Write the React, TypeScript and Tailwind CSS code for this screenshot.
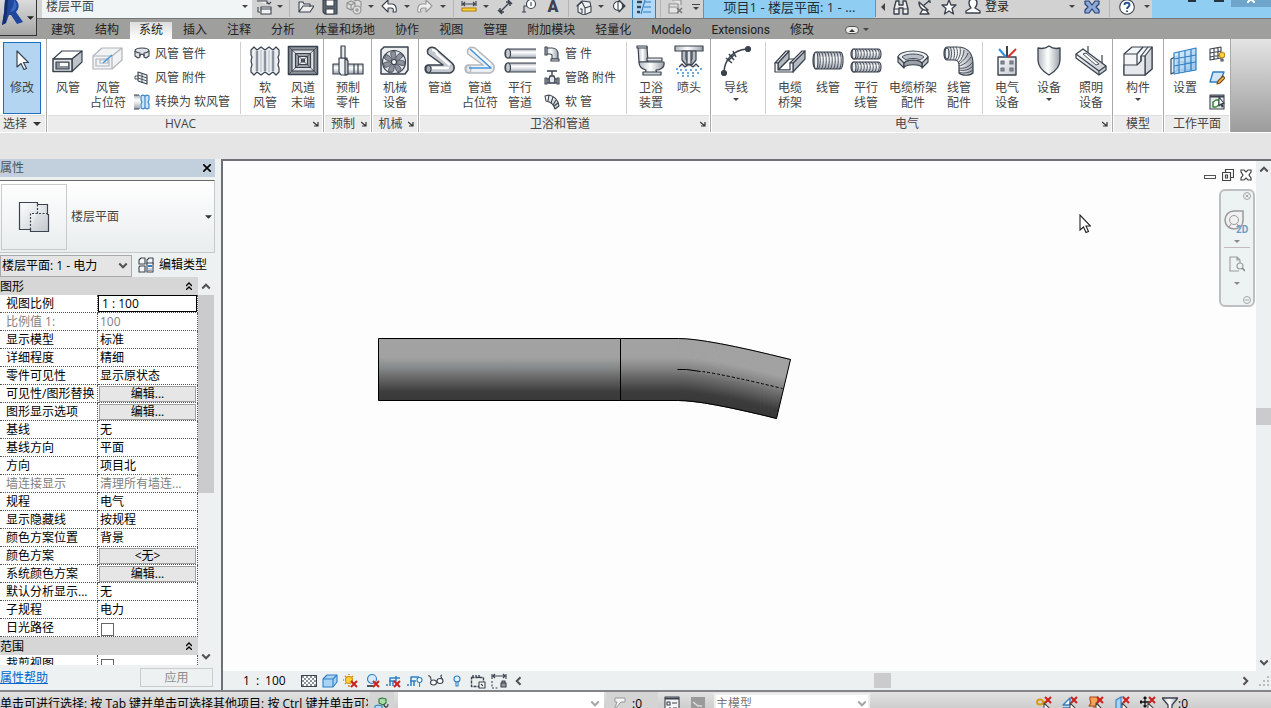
import type { ReactNode } from "react";

const INK = "#3b434f";
const BLUE = "#2f7fc4";

/* ---------- shared bits ---------- */

const Defs = () => (
  <svg className="absolute h-0 w-0" aria-hidden="true">
    <defs>
      <linearGradient id="metal" x1="0" y1="0" x2="0" y2="1">
        <stop offset="0" stopColor="#a3aab2" />
        <stop offset="0.35" stopColor="#ffffff" />
        <stop offset="0.6" stopColor="#dfe3e7" />
        <stop offset="1" stopColor="#9aa1a9" />
      </linearGradient>
      <linearGradient id="metalH" x1="0" y1="0" x2="1" y2="0">
        <stop offset="0" stopColor="#b4bac1" />
        <stop offset="0.45" stopColor="#ffffff" />
        <stop offset="1" stopColor="#9aa1a9" />
      </linearGradient>
      <linearGradient id="soft" x1="0" y1="0" x2="1" y2="1">
        <stop offset="0" stopColor="#ffffff" />
        <stop offset="1" stopColor="#c3c8ce" />
      </linearGradient>
      <linearGradient id="glass" x1="0" y1="0" x2="1" y2="1">
        <stop offset="0" stopColor="#e3f2fd" />
        <stop offset="1" stopColor="#7db9e8" />
      </linearGradient>
      <linearGradient id="duct" x1="0" y1="0" x2="0" y2="1">
        <stop offset="0" stopColor="#a2a2a2" />
        <stop offset="0.3" stopColor="#a2a2a2" />
        <stop offset="0.48" stopColor="#858888" />
        <stop offset="0.62" stopColor="#6a6a6a" />
        <stop offset="0.76" stopColor="#505050" />
        <stop offset="0.86" stopColor="#3d3d3d" />
        <stop offset="1" stopColor="#393939" />
      </linearGradient>
    </defs>
  </svg>
);

const Svg32 = ({ children }: { children: ReactNode }) => (
  <svg className="h-8 w-8 shrink-0" viewBox="0 0 32 32" fill="none" stroke={INK} strokeWidth="1.2" strokeLinejoin="round">
    {children}
  </svg>
);

const Svg16 = ({ children }: { children: ReactNode }) => (
  <svg className="h-4 w-4 shrink-0" viewBox="0 0 16 16" fill="none" stroke={INK} strokeWidth="1.1" strokeLinejoin="round">
    {children}
  </svg>
);

const Caret = () => (
  <svg className="h-[3px] w-[6px] shrink-0 text-[#444]" viewBox="0 0 6 3">
    <path d="M0 0h6L3 3z" fill="currentColor" />
  </svg>
);

const Chevron = ({ d, color = "#505050" }: { d: string; color?: string }) => (
  <svg className="h-[10px] w-[10px] shrink-0" viewBox="0 0 8 8" fill="none" stroke={color} strokeWidth="1.6">
    <path d={d} />
  </svg>
);

const UP = "M1 6l3-3 3 3";
const DOWN = "M1 2l3 3 3-3";
const LEFT = "M6 1L3 4l3 3";
const RIGHT = "M2 1l3 3-3 3";

const RedX = ({ x = 8, y = 8 }: { x?: number; y?: number }) => (
  <path d={`M${x} ${y}l6 6m0-6l-6 6`} stroke="#c9201c" strokeWidth="2" />
);

/* ---------- ribbon icons, 32px ---------- */

const ArrowIcon = () => (
  <Svg32>
    <path d="M11 6v16l4-3.500 3 6 2.500-1-3-6h5z" fill="#fff" />
  </Svg32>
);

const DuctIcon = () => (
  <Svg32>
    <path d="M1 14l9-8h20L20 14z" fill="#fff" />
    <path d="M20 14l10-8v11l-10 9.500z" fill="#bfc4ca" />
    <path d="M1 14h19v12.500H1z" fill="#e6e8eb" strokeWidth="1.500" />
    <path d="M4 17h13v7H4z" fill="#8b929b" />
    <path d="M8 18h8v3H8z" fill="#fff" stroke="none" />
  </Svg32>
);

const DuctGhostIcon = () => (
  <Svg32>
    <g stroke="#b0b4b9">
      <path d="M1 11l9-8h20v12l-10 9H1z" fill="#f2f3f4" />
      <path d="M1 11h19v13M20 11l10-8M4 14h13v7H4z" />
      <path d="M8 15h8v3H8z" fill="#fff" />
    </g>
    <path d="M11 18l9-8" stroke="#4a9be0" strokeWidth="1.6" />
  </Svg32>
);

const FlexDuctIcon = () => (
  <Svg32>
    <path
      d="M2 5l3-3 3 3 4-3 4 3 4-3 4 3 3-3 3 3v5l-1 2 1 4-1 4 1 3v4l-3 3-3-3-4 3-4-3-4 3-4-3-3 3-3-3v-4l1-3-1-4 1-4-1-2z"
      fill="#eceef1"
    />
    <path d="M8 6v20M16 6v20M24 6v20" stroke="#8b929b" strokeWidth="2.500" />
    <path d="M12 5v22M20 5v22" stroke="#c3c8ce" strokeWidth="1.500" />
  </Svg32>
);

const TerminalIcon = () => (
  <Svg32>
    <path d="M1.500 1.500h29v28h-29z" fill="#8e959d" strokeWidth="1.600" />
    <path d="M5 5h22v21H5z" fill="#dfe2e5" />
    <path d="M8.500 8.500h15v14h-15z" fill="#9ba1a9" />
    <path d="M11.500 11.500h9v8h-9z" fill="#eceef0" />
    <path d="M14.500 14h3v3h-3z" fill="#555d68" />
    <path d="M1.500 1.500l13 12.500m3 0l13-12.500m-29 28l13-12.500m3 0l13 12.500" strokeWidth="0.800" />
  </Svg32>
);

const FabIcon = () => (
  <Svg32>
    <path d="M1 19h8v10H1zM15 19h16v10H15z" fill="url(#metal)" />
    <path d="M22 19v10m4-10v10" />
    <path d="M7 13h8v17H9l-2-3z" fill="#f2f4f5" />
    <path d="M9 1h4v12H9zM13 13l3 3v13l-3 1z" fill="url(#metalH)" />
  </Svg32>
);

const FanIcon = () => (
  <Svg32>
    <path d="M2 5l3-3h24v23l-3 4H2z" fill="#eceef0" strokeWidth="1.500" />
    <circle cx="15" cy="17" r="11.500" fill="#e4e7ea" />
    {[0, 51, 103, 154, 206, 257, 309].map((a) => (
      <path key={a} d="M15 15C12 13 11 9 12 7l4-1c1 3 1 6-1 9z" fill="#8b929b" strokeWidth="0.700" transform={`rotate(${a} 15 17)`} />
    ))}
    <circle cx="15" cy="17" r="2.500" fill="#fff" />
  </Svg32>
);

const PipeIcon = ({ ghost = false }: { ghost?: boolean }) => (
  <Svg32>
    <g stroke={ghost ? "#b4b8bd" : INK}>
      <path d="M4 20h15L4 9C2 4 6 1 11 3l17 15c4 4 2 9-2 10H5c-5 0-5-8-1-8z" fill={ghost ? "#eceef0" : "#c3c8ce"} strokeWidth="1.500" />
      <path d="M8 5c3 0 5 2 5 4l13 11M8 23h17" stroke="#fff" strokeWidth="2.500" />
      <ellipse cx="4.500" cy="24" rx="2.500" ry="3.500" fill={ghost ? "#e4e6e9" : "#a3aab2"} />
    </g>
    {ghost && <path d="M6 4l21 19H5" stroke="#3f94df" strokeWidth="1.500" />}
  </Svg32>
);

const ParallelPipeIcon = () => (
  <Svg32>
    {[4, 18].map((y) => (
      <g key={y}>
        <path d={`M32 ${y}H4c-4 0-4 9 0 9h28`} fill="url(#metal)" strokeWidth="1.200" />
        <ellipse cx="4" cy={y + 4.5} rx="2.500" ry="4.500" fill="#c5cad0" />
      </g>
    ))}
  </Svg32>
);

const ToiletIcon = () => (
  <Svg32>
    <path d="M3 2h9l1 15H4z" fill="url(#metalH)" />
    <path d="M2 1h10v2H2zM12 13h15v3H12z" fill="#e4e7ea" />
    <path d="M4 17h25c1 6-4 8-8 8l1 4H10l1-4c-4-1-7-4-7-8z" fill="url(#metalH)" />
    <path d="M8 27h18v3H8z" fill="#cfd4d9" />
  </Svg32>
);

const SprinklerIcon = () => (
  <Svg32>
    <path d="M2 1h28v5H2z" fill="url(#metalH)" />
    <path d="M9 6h4v8l3 4 3-4V6h4v9l-5 6h-4l-5-6z" fill="#b7bdc4" />
    <path d="M14 6h4v14h-4zM6 22l3-3 3 3 4-3 4 3 3-3 3 3" fill="#e4e7ea" />
    <path d="M7 25h18M4 28h24M9 31h14" stroke="#3d8fd6" strokeWidth="1.500" strokeDasharray="2 3" />
    <path d="M3 24h2m22 0h2" stroke="#3d8fd6" strokeWidth="1.500" />
  </Svg32>
);

const WireIcon = () => (
  <Svg32>
    <path d="M4 28C4 15 13 5 27 4" strokeWidth="1.500" />
    <circle cx="4" cy="28" r="2.500" fill={INK} />
    <circle cx="28" cy="4" r="2.500" fill={INK} />
    <path d="M6 13l6 5m-3-9l5 6m-1-9l3 6m-8 4l6-6" strokeWidth="1.500" />
  </Svg32>
);

const TrayIcon = () => (
  <Svg32>
    <path d="M4 25l11-11h7l-5 11z" fill="#fff" />
    <path d="M4 18L15 6v8L4 25z" fill="#b4bac1" />
    <path d="M1 18L12 6h3L4 18z" fill="#f2f3f5" />
    <path d="M19 18L31 6v8L19 27z" fill="#b4bac1" />
    <path d="M16 18L28 6h3L19 18z" fill="#f2f3f5" />
    <path d="M1 18h3v7h12v-7h3v9H1z" fill="#f4f5f6" />
  </Svg32>
);

const Coil = ({ y, h }: { y: number; h: number }) => (
  <g>
    <path d={`M4 ${y}h24c4 0 4 ${h} 0 ${h}H4c-4 0-4-${h} 0-${h}z`} fill="url(#metal)" strokeWidth="1.200" />
    {[6, 9, 12, 15, 18, 21, 24, 27].map((x) => (
      <path key={x} d={`M${x} ${y}c3 1 3 ${h - 1} 0 ${h}`} strokeWidth="0.9" />
    ))}
    <ellipse cx="4" cy={y + h / 2} rx="2" ry={h / 2} fill="#eceef0" />
  </g>
);

const ConduitIcon = () => (
  <Svg32>
    <Coil y={7} h={17} />
  </Svg32>
);

const ParallelConduitIcon = () => (
  <Svg32>
    <Coil y={4} h={10} />
    <Coil y={17} h={10} />
  </Svg32>
);

const TrayFittingIcon = () => (
  <Svg32>
    <path d="M1 12v5l6 6v-6zM31 12v5l-6 6v-6z" fill="#c3c8ce" />
    <path d="M7 18c4-4 14-4 18 0v4c-4-3-14-3-18 0z" fill="#9aa1a9" />
    <path d="M1 12C3 4 29 4 31 12l-6 6c-3-4-15-4-18 0z" fill="#eceef0" />
    <path d="M5 12c3-4 19-4 22 0l-4 3c-3-2-11-2-14 0z" fill="#b9bfc6" strokeWidth="0.900" />
  </Svg32>
);

const ConduitFittingIcon = () => (
  <Svg32>
    <path d="M4 2h10c12 0 16 8 16 17v9c-3 3-11 3-14 0v-8c0-3-2-5-5-5H4C0 15 0 2 4 2z" fill="url(#metalH)" strokeWidth="1.200" />
    <path d="M7 2c2 3 2 10 0 13M10 2c2 3 2 10 0 13M13 2c2 3 2 10-1 13M17 3c1 4 0 9-3 12.500M21 5c0 4-2 9-5 12M25 8c-1 4-5 8-9 11M28 12c-3 5-8 8-12 9M30 17c-4 5-9 7-14 6M30 21c-4 4-9 5-14 4M30 25c-4 3-10 4-14 2" strokeWidth="0.900" />
    <ellipse cx="4" cy="8.500" rx="2" ry="5.500" fill="#eceef0" />
  </Svg32>
);

const ElecEquipIcon = () => (
  <Svg32>
    <path d="M7 12h18v18H7z" fill="url(#soft)" strokeWidth="1.400" />
    <path d="M16 1v11" strokeWidth="2" />
    <path d="M8 4l7 8" stroke="#2e8fe0" strokeWidth="2" />
    <path d="M25 4l-8 8" stroke="#d8322b" strokeWidth="2" />
    <path d="M10 16h3v3h-3zM19 16h3v3h-3zM10 23h3v3h-3zM19 23h3v3h-3z" fill="#8b929b" stroke="#6b737d" />
  </Svg32>
);

const ShieldIcon = () => (
  <Svg32>
    <path d="M16 1c4 3 7 3 11 2v12c0 6-4 11-11 15C9 26 5 21 5 15V3c4 1 7 1 11-2z" fill="url(#metalH)" strokeWidth="1.300" />
  </Svg32>
);

const LightIcon = () => (
  <Svg32>
    <path d="M13 1v8M27 10v8" />
    <path d="M1 9l7-5 23 17v4l-7 5L1 13z" fill="url(#soft)" strokeWidth="1.300" />
    <path d="M1 9l23 17v4m0-4l7-5" />
    <path d="M8 9l3-1 13 11-3 1z" fill="#fff" strokeWidth="0.900" />
  </Svg32>
);

const ComponentIcon = () => (
  <Svg32>
    <path d="M2 9l8-7h20v22l-7 6H2z" fill="#f4f5f6" />
    <path d="M23 11l7-9v22l-7 6z" fill="#d3d7db" />
    <path d="M2 20h13l4-4v-5h4v19H2z" fill="#e6e8eb" />
    <path d="M2 9h13v11M15 9l6-7M19 11l7-9M19 11v5" strokeWidth="1.200" />
  </Svg32>
);

const WorkplaneIcon = () => (
  <Svg32>
    <path d="M2 14l6-3v15l-6 3zM8 17h14v8H8z" fill="#eef0f2" />
    <path d="M5 8l22-5v22L5 29z" fill="url(#glass)" fillOpacity="0.85" stroke={BLUE} />
    <path d="M10 7v21M16 6v21M22 4v22M5 14l22-4M5 21l22-4" stroke={BLUE} />
  </Svg32>
);

/* ---------- ribbon icons, 16px ---------- */

const DuctFitting = () => (
  <Svg16>
    <path d="M1 5c0-4 14-4 14 0v5l-3 2-2-1V9c-1-1-3-1-4 0v2l-2 1-3-2z" fill="#dfe2e6" />
    <path d="M1 5c2 2 3 2 5 2v3m9-5c-2 2-3 2-5 2v3" />
  </Svg16>
);
const DuctAccessory = () => (
  <Svg16>
    <path d="M4 2l9 3v9L4 11z" fill="#eceef0" />
    <path d="M4 5l9 3M4 8l9 3M1 6h3M1 6v3h3M8 3v10" strokeWidth="0.900" />
  </Svg16>
);
const ConvertFlex = () => (
  <Svg16>
    <path d="M0 1h6v14H0z" fill="url(#metal)" stroke="none" />
    <path d="M0 1h5m-5 14h5" />
    <path d="M7 2l2-1 2 1 2-1 2 1v4l-1 2 1 2v4l-2 1-2-1-2 1-2-1v-4l1-2-1-2z" fill="#cde6fa" stroke={BLUE} />
    <path d="M11 2v12" stroke={BLUE} />
  </Svg16>
);
const PipeFitting = () => (
  <Svg16>
    <path d="M1 1h2v8H1zM3 2h5c4 0 6 3 6 6v5H8V9c0-1-1-1-2-1H3z" fill="url(#metalH)" />
    <path d="M7 13h8v2H7z" fill="#e4e7ea" />
  </Svg16>
);
const PipeAccessory = () => (
  <Svg16>
    <path d="M3 1h10M8 1v5M6 6h4l1 3v4H5V9z" fill="#e4e7ea" strokeWidth="1.400" />
    <path d="M1 8h2v6H1zM13 8h2v6h-2zM3 9h2v4H3zM11 9h2v4h-2z" fill="#b9bfc6" />
  </Svg16>
);
const FlexPipe = () => (
  <Svg16>
    <path d="M1 2l4-1c5 1 9 5 10 11l-4 3c-1-4-3-7-9-8z" fill="url(#soft)" />
    <path d="M5 1L4 7m5-4L7 9m5-3L9 11m5-2l-4 3" />
  </Svg16>
);
const ShowPlane = () => (
  <Svg16>
    <path d="M1 3l11-2v11L1 14zM5 2v11M9 1v11M1 7l11-2M1 11l11-2" fill="#fff" />
    <circle cx="13" cy="9" r="2.800" fill="#ffd23c" stroke="#b98a10" />
    <path d="M12 13h2v2h-2z" fill="#fff" />
  </Svg16>
);
const RefPlane = () => (
  <Svg16>
    <path d="M4 2h11l-4 10H1z" fill="#cfe6fa" stroke={BLUE} strokeWidth="1.400" />
    <path d="M8 14l1-3 5-5 2 2-5 5z" fill="#f0b45a" stroke="#7b4b14" />
  </Svg16>
);
const ViewerPlane = () => (
  <Svg16>
    <path d="M1 1h14v14H1z" fill="#e8eaec" />
    <path d="M1 2.500h14" strokeWidth="2" />
    <path d="M4 8l3-2h3v5l-3 2H4z" fill="#fff" stroke="#2d8a34" strokeWidth="1.500" />
    <path d="M10 3v9l2-2 1 3 1-.5-1-3h2z" fill="#fff" />
  </Svg16>
);

/* ---------- quick access bar ---------- */

const Tool = ({ label, className = "w-6", children }: { label: string; className?: string; children: ReactNode }) => (
  <button aria-label={label} className={`flex h-4 shrink-0 items-center justify-center ${className}`}>
    {children}
  </button>
);

const Sep = ({ className = "w-[10px]" }: { className?: string }) => (
  <div className={`flex h-5 shrink-0 justify-center ${className}`}>
    <div className="h-5 w-px bg-[#b4b4b4]" />
  </div>
);

const QuickAccess = () => (
  <div className="flex h-[19px] items-center overflow-hidden border-b border-[#777] bg-[#d2d2d2] pb-[5px]">
    <div className="ml-[5px] flex h-6 w-[210px] shrink-0 items-center bg-[#f1f5f6] pr-1">
      <select aria-label="视图类型" className="flex-1 appearance-none bg-transparent pl-1 text-xs text-[#444] outline-none">
        <option>楼层平面</option>
      </select>
      <Caret />
    </div>
    <Tool label="切换窗口" className="w-[23px]">
      <Svg16>
        <path d="M1 2h10v3M5 8h10v7H5zM5 10h10M2 8v5h2m7-10l2 2 2-2" fill="#f4f4f4" />
      </Svg16>
    </Tool>
    <Tool label="窗口选项" className="w-[9px]"><Caret /></Tool>
    <Sep />
    <Tool label="打开">
      <Svg16>
        <path d="M1 13V3h4l1 2h6v3M1 13l4-6h11l-4 6z" fill="#eee" />
      </Svg16>
    </Tool>
    <Tool label="保存">
      <Svg16>
        <path d="M1 1h14v14H3l-2-2z" fill="#5c6470" />
        <path d="M4 1h8v6H4zM4 10h8v5H4z" fill="#fff" />
      </Svg16>
    </Tool>
    <Tool label="同步">
      <Svg16>
        <g stroke="#8f8f8f" fill="#dcdcdc">
          <path d="M1 4l4-2 4 2v5l-4 2-4-2zM1 4l4 2 4-2M5 6v5M8 2l4-1 3 2v5l-4 2" />
          <circle cx="11" cy="11" r="4" />
          <path d="M9 11h4m-2-2v4" />
        </g>
      </Svg16>
    </Tool>
    <Tool label="同步选项" className="w-[10px]"><Caret /></Tool>
    <Tool label="放弃" className="w-[26px]">
      <Svg16>
        <path d="M1 7l6-6v4h4c3 0 5 3 4 8h-3c1-3 0-4-2-4H7v4z" fill="#fff" />
      </Svg16>
    </Tool>
    <Tool label="放弃选项" className="w-[10px]"><Caret /></Tool>
    <Tool label="重做" className="w-[26px]">
      <Svg16>
        <path d="M15 7L9 1v4H5c-3 0-5 3-4 8h3c-1-3 0-4 2-4h3v4z" fill="#eee" stroke="#999" />
      </Svg16>
    </Tool>
    <Tool label="重做选项" className="w-[10px]"><Caret /></Tool>
    <Sep />
    <Tool label="测量" className="w-[22px]">
      <Svg16>
        <path d="M1 2v5m14-5v5M2 5h12M4 3L2 5l2 2m8-4l2 2-2 2" />
        <path d="M1 9h14v3H1z" fill="#ffd23c" stroke="#b27c08" />
      </Svg16>
    </Tool>
    <Tool label="测量选项" className="w-3"><Caret /></Tool>
    <Tool label="对齐尺寸标注" className="w-[25px]">
      <Svg16>
        <path d="M3 13L13 3M9 3h4v4M3 9v4h4M11 1l4 4M1 11l4 4" strokeWidth="1.400" />
      </Svg16>
    </Tool>
    <Tool label="按类别标记">
      <Svg16>
        <circle cx="10" cy="5" r="4.500" fill="#fff" />
        <path d="M10 3v4M6 7H3v6M1 13h4" />
      </Svg16>
    </Tool>
    <Tool label="文字">
      <span className="font-[Roboto] text-base font-black leading-4 text-[#3b434f]">A</span>
    </Tool>
    <Sep className="w-[7px]" />
    <Tool label="默认三维视图">
      <Svg16>
        <path d="M1 7l5-5 8 1 1 5v5l-7 3-6-3V7z" fill="#f1f1f1" />
        <path d="M1 7l5-4 3 6v6M9 9l6-2M4 10h2v4" />
      </Svg16>
    </Tool>
    <Tool label="三维视图选项" className="w-[10px]"><Caret /></Tool>
    <Tool label="剖面" className="w-[26px]">
      <Svg16>
        <path d="M8 1l6 6-6 6z" fill={INK} />
        <circle cx="7" cy="7" r="4.500" fill="#fff" />
        <path d="M7 2.500v9" />
      </Svg16>
    </Tool>
    <button aria-label="细线" className="flex h-6 w-6 shrink-0 items-center justify-center border border-[#2f7fc4] bg-[#b5d8f5]">
      <Svg16>
        <path d="M1 3h5m-5 5h4m-4 5h3" strokeWidth="2.400" />
        <path d="M9 3h6M8 8h7M7 13h8M9 1L5 15" stroke={BLUE} />
      </Svg16>
    </button>
    <Sep className="w-2" />
    <Tool label="关闭隐藏窗口">
      <Svg16>
        <path d="M4 1h9v5M1 5h9v9H1zM1 8h8" stroke="#8f8f8f" fill="#e4e4e4" />
        <path d="M9 9l5 5m0-5l-5 5" stroke="#777" strokeWidth="1.600" />
      </Svg16>
    </Tool>
    <Tool label="自定义" className="w-[15px]">
      <svg className="h-2 w-2" viewBox="0 0 8 8" fill="#444">
        <path d="M0 1h8v1H0zM1 4h6L4 7z" />
      </svg>
    </Tool>
    <div className="h-6 min-w-0 flex-1 overflow-hidden border-l border-[#888] bg-[#8fcdf2] text-center text-[13px] leading-6 whitespace-nowrap text-[#20303c]">
      项目1 - 楼层平面: 1 - ...
    </div>
    <div className="flex shrink-0 items-center border-l border-[#888]">
      <Tool label="收起" className="w-[13px]">
        <svg className="h-2 w-1" viewBox="0 0 4 8"><path d="M4 0v8L0 4z" fill="#444" /></svg>
      </Tool>
      <Tool label="搜索">
        <Svg16>
          <path d="M3 2h3v4h4V2h3l2 8v5h-5V9H6v6H1v-5z" fill="#eee" strokeWidth="1.400" />
          <path d="M1 10h5m4 0h5" />
        </Svg16>
      </Tool>
      <Tool label="通讯中心">
        <Svg16>
          <path d="M2 3c0 6 4 9 9 8zM6 7l6-5m-1 0h2v2M6 10l-3 5h9l-3-4" fill="#fff" strokeWidth="1.400" />
        </Svg16>
      </Tool>
      <Tool label="收藏夹">
        <Svg16>
          <path d="M8 1l2 5h5l-4 3.500 1.500 5.500L8 12l-4.500 3L5 9.500 1 6h5z" fill="#fff" strokeWidth="1.300" />
        </Svg16>
      </Tool>
      <Tool label="用户">
        <Svg16>
          <path d="M8 0c3 0 4 2 4 4s-1 4-2 5l5 3v2H1v-2l5-3C5 8 4 6 4 4s1-4 4-4z" fill="#fff" strokeWidth="1.400" />
        </Svg16>
      </Tool>
      <button className="w-[81px] text-left text-xs leading-4 text-[#222]">登录</button>
      <Tool label="登录选项" className="w-3"><Caret /></Tool>
      <Tool label="应用商店" className="w-7">
        <Svg16>
          <path d="M1 2h4l3 4 3-4h4v3l-3 3 3 3v3h-4l-3-4-3 4H1v-3l3-3-3-3z" fill="#8fa9d6" stroke="#26427c" strokeWidth="1.200" />
        </Svg16>
      </Tool>
      <Sep className="w-[7px]" />
      <Tool label="帮助" className="w-7">
        <Svg16>
          <circle cx="8" cy="8" r="7.300" fill="#fff" />
          <path d="M5.500 6c0-3 5-3 5 0 0 2-2.500 2-2.500 4m0 1.500V13" stroke="#27508f" strokeWidth="1.900" />
        </Svg16>
      </Tool>
      <Tool label="帮助选项" className="w-[11px]"><Caret /></Tool>
    </div>
    <div className="flex h-6 w-[119px] shrink-0 items-start bg-[#8fcdf2]">
      <button aria-label="最小化" className="ml-9 mt-[3px] h-1 w-2 bg-[#26333d]" />
      <button aria-label="还原" className="ml-[18px] h-[7px] w-[10px] border-2 border-[#26333d]" />
      <button aria-label="关闭" className="ml-auto flex h-3 w-10 justify-center bg-[#6fa5cb]">
        <svg className="h-2 w-2" viewBox="0 0 8 8" stroke="#fff" strokeWidth="2"><path d="M0 0l8 8M8 0L0 8" /></svg>
      </button>
    </div>
  </div>
);

/* ---------- tabs ---------- */

const tabs = ["建筑", "结构", "系统", "插入", "注释", "分析", "体量和场地", "协作", "视图", "管理", "附加模块", "轻量化", "Modelo", "Extensions", "修改"];

const Tabs = () => (
  <nav className="flex h-5 items-end bg-[#9f9f9e] pl-1 font-[Roboto,'Noto_Sans_CJK_SC',sans-serif]">
    {tabs.map((t) => (
      <button
        key={t}
        className={
          t === "系统"
            ? "mx-px h-[17px] shrink-0 bg-linear-to-b from-[#dcdcdc] to-white px-[9px] text-xs leading-[15px] text-[#222]"
            : "h-[17px] shrink-0 px-[10px] text-xs leading-[15px] text-[#222]"
        }
      >
        {t}
      </button>
    ))}
    <button aria-label="最小化功能区" className="mb-[5px] ml-[21px] flex h-2 w-[14px] items-center justify-center rounded-sm border border-[#555] bg-[#eee]">
      <svg className="h-[3px] w-[6px]" viewBox="0 0 6 3"><path d="M0 3h6L3 0z" fill="#333" /></svg>
    </button>
    <button aria-label="功能区选项" className="mb-2 ml-1"><Caret /></button>
  </nav>
);

/* ---------- ribbon ---------- */

interface PanelProps {
  title: string;
  className?: string;
  launcher?: boolean;
  children: ReactNode;
}

const Panel = ({ title, className = "", launcher, children }: PanelProps) => (
  <section className={`flex shrink-0 flex-col border-r border-[#a9a9a9] ${className}`}>
    <div className="flex h-[76px] flex-none pl-px">{children}</div>
    <div className="mx-px flex h-[17px] items-center border-t border-[#dcdcdc] bg-[#ececec] text-xs leading-4 text-[#444]">
      <span className="flex-1 text-center whitespace-nowrap">{title}</span>
      {launcher && (
        <button aria-label={`${title} 设置`} className="mr-[3px]">
          <svg className="h-[6px] w-[6px]" viewBox="0 0 6 6" fill="none" stroke="#333" strokeWidth="1.200">
            <path d="M0 1l5 4M5 1v4H1" />
          </svg>
        </button>
      )}
    </div>
  </section>
);

interface BigProps {
  icon: ReactNode;
  lines: string[];
  className?: string;
  menu?: boolean;
}

const Big = ({ icon, lines, className = "w-[38px]", menu }: BigProps) => (
  <button className={`flex shrink-0 flex-col items-center pt-[6px] text-xs leading-[15px] whitespace-nowrap text-[#444] ${className}`}>
    {icon}
    <span className="mt-[3px] h-[15px]">{lines[0]}</span>
    {lines[1] && <span className="h-[15px]">{lines[1]}</span>}
    {menu && <span className="mt-[3px] flex"><Caret /></span>}
  </button>
);

const Small = ({ icon, label }: { icon: ReactNode; label: string }) => (
  <button className="flex h-6 items-center gap-[5px] text-xs whitespace-nowrap text-[#444]">
    {icon}
    {label}
  </button>
);

const Rule = () => <div className="mx-[5px] mt-[3px] h-[72px] w-px shrink-0 bg-[#cfcfcf]" />;

const Ribbon = () => (
  <div className="flex h-[94px] shrink-0 border-b border-white bg-white">
    <section className="flex w-[47px] shrink-0 flex-col border-r border-[#a9a9a9]">
      <div className="h-[76px] pl-[3px] pt-[3px]">
        <button className="flex h-[72px] w-[38px] flex-col items-center border border-[#1e70bf] bg-[#b3d5f2] pt-[2px] text-xs leading-[15px] text-[#444]">
          <ArrowIcon />
          <span className="mt-[3px]">修改</span>
        </button>
      </div>
      <button className="mr-px flex h-[17px] items-center gap-[6px] border-t border-[#dcdcdc] bg-[#ececec] pl-[3px] text-xs leading-4 text-[#444]">
        选择
        <svg className="h-1 w-2" viewBox="0 0 8 4"><path d="M0 0h8L4 4z" fill="#333" /></svg>
      </button>
    </section>

    <Panel title="HVAC" launcher className="w-[277px]">
      <Big className="w-10" icon={<DuctIcon />} lines={["风管"]} />
      <Big className="w-10" icon={<DuctGhostIcon />} lines={["风管", "占位符"]} />
      <div className="flex w-[107px] flex-col pl-[6px] pt-[3px]">
        <Small icon={<DuctFitting />} label="风管 管件" />
        <Small icon={<DuctAccessory />} label="风管 附件" />
        <Small icon={<ConvertFlex />} label="转换为 软风管" />
      </div>
      <Rule />
      <Big icon={<FlexDuctIcon />} lines={["软", "风管"]} />
      <Big icon={<TerminalIcon />} lines={["风道", "末端"]} />
    </Panel>

    <Panel title="预制" launcher className="w-12">
      <Big className="w-[46px]" icon={<FabIcon />} lines={["预制", "零件"]} />
    </Panel>

    <Panel title="机械" launcher className="w-[47px]">
      <Big className="w-[44px]" icon={<FanIcon />} lines={["机械", "设备"]} />
    </Panel>

    <Panel title="卫浴和管道" launcher className="w-[292px]">
      <Big className="w-10" icon={<PipeIcon />} lines={["管道"]} />
      <Big className="w-10" icon={<PipeIcon ghost />} lines={["管道", "占位符"]} />
      <Big className="w-10" icon={<ParallelPipeIcon />} lines={["平行", "管道"]} />
      <div className="flex w-[81px] flex-col pl-1 pt-[3px]">
        <Small icon={<PipeFitting />} label="管 件" />
        <Small icon={<PipeAccessory />} label="管路 附件" />
        <Small icon={<FlexPipe />} label="软 管" />
      </div>
      <Rule />
      <Big icon={<ToiletIcon />} lines={["卫浴", "装置"]} />
      <Big icon={<SprinklerIcon />} lines={["喷头"]} />
    </Panel>

    <Panel title="电气" launcher className="w-[402px]">
      <Big className="w-12" icon={<WireIcon />} lines={["导线"]} menu />
      <Rule />
      <Big icon={<TrayIcon />} lines={["电缆", "桥架"]} />
      <Big icon={<ConduitIcon />} lines={["线管"]} />
      <Big icon={<ParallelConduitIcon />} lines={["平行", "线管"]} />
      <Big className="w-14" icon={<TrayFittingIcon />} lines={["电缆桥架", "配件"]} />
      <Big className="w-9" icon={<ConduitFittingIcon />} lines={["线管", "配件"]} />
      <Rule />
      <Big icon={<ElecEquipIcon />} lines={["电气", "设备"]} />
      <Big className="w-[46px]" icon={<ShieldIcon />} lines={["设备"]} menu />
      <Big icon={<LightIcon />} lines={["照明", "设备"]} />
    </Panel>

    <Panel title="模型" className="w-[51px]">
      <Big className="w-12" icon={<ComponentIcon />} lines={["构件"]} menu />
    </Panel>

    <Panel title="工作平面" className="w-[67px]">
      <Big className="w-10" icon={<WorkplaneIcon />} lines={["设置"]} />
      <div className="flex flex-col gap-2 pl-1 pt-[7px]">
        <button aria-label="显示"><ShowPlane /></button>
        <button aria-label="参照平面"><RefPlane /></button>
        <button aria-label="查看器"><ViewerPlane /></button>
      </div>
    </Panel>
    <div className="flex-1 bg-linear-to-b from-[#e4e4e4] to-[#9c9c9c]" />
  </div>
);

/* ---------- properties palette ---------- */

interface Row {
  name: string;
  value?: string;
  kind?: "input" | "button" | "check" | "muted";
}

const graphics: Row[] = [
  { name: "视图比例", value: "1 : 100", kind: "input" },
  { name: "比例值 1:", value: "100", kind: "muted" },
  { name: "显示模型", value: "标准" },
  { name: "详细程度", value: "精细" },
  { name: "零件可见性", value: "显示原状态" },
  { name: "可见性/图形替换", value: "编辑...", kind: "button" },
  { name: "图形显示选项", value: "编辑...", kind: "button" },
  { name: "基线", value: "无" },
  { name: "基线方向", value: "平面" },
  { name: "方向", value: "项目北" },
  { name: "墙连接显示", value: "清理所有墙连...", kind: "muted" },
  { name: "规程", value: "电气" },
  { name: "显示隐藏线", value: "按规程" },
  { name: "颜色方案位置", value: "背景" },
  { name: "颜色方案", value: "<无>", kind: "button" },
  { name: "系统颜色方案", value: "编辑...", kind: "button" },
  { name: "默认分析显示...", value: "无" },
  { name: "子规程", value: "电力" },
  { name: "日光路径", kind: "check" },
];

const extents: Row[] = [{ name: "裁剪视图", kind: "check" }];

const Cell = ({ row }: { row: Row }) => {
  if (row.kind === "input")
    return <input id={row.name} defaultValue={row.value} className="block h-[17px] w-full border border-black bg-white px-[3px] text-xs outline-none" />;
  if (row.kind === "button")
    return (
      <button id={row.name} className="mx-px block h-4 w-[97px] border border-[#a0a0a0] bg-[#e6e6e6] text-xs leading-[14px]">
        {row.value}
      </button>
    );
  if (row.kind === "check")
    return <input id={row.name} type="checkbox" className="ml-[3px] mt-[3px] block h-[13px] w-[13px] appearance-none border border-[#666] bg-white" />;
  return <span className="pl-[2px]">{row.value}</span>;
};

const Group = ({ title, rows }: { title: string; rows: Row[] }) => (
  <tbody>
    <tr>
      <th colSpan={2} scope="colgroup" className="h-[18px] bg-[#d6d6d6] p-0 text-left font-normal">
        <div className="flex items-center justify-between pr-[6px]">
          {title}
          <button aria-label={`折叠${title}`}>
            <svg className="h-2 w-[6px]" viewBox="0 0 6 8" fill="none" stroke="#000" strokeWidth="1.300">
              <path d="M0 4l3-3 3 3M0 8l3-3 3 3" />
            </svg>
          </button>
        </div>
      </th>
    </tr>
    {rows.map((r) => (
      <tr key={r.name} className={r.kind === "muted" ? "text-[#808080]" : "text-black"}>
        <th scope="row" className="h-[18px] border-r border-b border-dotted border-[#555] p-0 pl-[6px] text-left font-normal whitespace-nowrap">
          {r.kind && r.kind !== "muted" ? <label htmlFor={r.name}>{r.name}</label> : r.name}
        </th>
        <td className="h-[18px] border-r border-b border-dotted border-[#555] p-0 whitespace-nowrap">
          <Cell row={r} />
        </td>
      </tr>
    ))}
  </tbody>
);

const Properties = () => (
  <aside className="flex w-[221px] shrink-0 flex-col bg-[#eef1f2] pr-[6px] text-xs">
    <div className="flex h-[18px] shrink-0 items-center justify-between bg-[#c2cfdd] pr-1 text-[#4b5560]">
      属性
      <button aria-label="关闭属性">
        <svg className="h-2 w-2" viewBox="0 0 8 8" stroke="#000" strokeWidth="1.600"><path d="M0 0l8 8M8 0L0 8" /></svg>
      </button>
    </div>
    <div className="mt-[3px] flex h-[73px] shrink-0 items-center border-t border-r border-b border-t-[#666] border-r-[#c6c9cb] border-b-[#c6c9cb] bg-linear-to-b from-white to-[#e9edee] pl-px">
      <div className="flex h-[66px] w-[66px] items-center justify-center border border-[#c8cacc]">
        <svg className="h-8 w-8" viewBox="0 0 32 32" fill="url(#soft)" stroke={INK} strokeWidth="1.200">
          <path d="M1.500 1.500h18v2h10v10h1v17h-18v-2h-11z" />
          <path d="M19.500 3.500v9h10M12.500 28.500v-16h7" strokeDasharray="2 1.500" />
        </svg>
      </div>
      <button className="flex flex-1 items-center justify-between pl-1 pr-[2px] text-[#444]">
        楼层平面
        <svg className="h-1 w-[7px]" viewBox="0 0 8 4"><path d="M0 0h8L4 4z" fill="#333" /></svg>
      </button>
    </div>
    <div className="mt-px flex h-[23px] shrink-0 items-center">
      <div className="flex h-[22px] w-[132px] items-center border border-[#a9a9a9] bg-[#e5e5e5] pr-[3px]">
        <select aria-label="实例" className="min-w-0 flex-1 appearance-none bg-transparent pl-px text-xs outline-none">
          <option>楼层平面: 1 - 电力</option>
        </select>
        <Chevron d={DOWN} />
      </div>
      <button className="ml-[6px] flex items-center gap-[5px] pb-[2px]">
        <Svg16>
          <path d="M1 3l2-2h4v6H1zM9 3l2-2h4v6H9zM1 10l1-1h5v6H1z" fill="#f4f4f4" />
          <path d="M9 6h6v9H9z" fill="#fff" />
          <path d="M10.500 8.500h3v1h-3z" stroke={BLUE} />
          <path d="M10.500 12h1m1 0h1m-3 1.500h1m1 0h1" />
        </Svg16>
        编辑类型
      </button>
    </div>
    <div className="flex min-h-0 flex-1">
      <div className="w-[198px] overflow-hidden bg-white">
        <table className="w-full table-fixed border-separate border-spacing-0 leading-[17px]">
          <colgroup>
            <col className="w-[98px]" />
            <col />
          </colgroup>
          <Group title="图形" rows={graphics} />
          <Group title="范围" rows={extents} />
        </table>
      </div>
      <div className="flex w-[16px] flex-col items-center bg-[#eef0f1]">
        <button aria-label="向上滚动" className="flex h-[18px] items-center"><Chevron d={UP} /></button>
        <div className="h-[198px] w-full bg-[#cbcbcd]" />
        <button aria-label="向下滚动" className="mt-auto flex h-4 items-center"><Chevron d={DOWN} /></button>
      </div>
    </div>
    <div className="flex h-[25px] shrink-0 items-center justify-between pr-[2px]">
      <a href="#help" className="text-[#0066cc] underline">属性帮助</a>
      <button disabled className="h-[19px] w-[73px] border border-[#c9cbcc] leading-4 text-[#8d8d8d]">应用</button>
    </div>
  </aside>
);

/* ---------- drawing area ---------- */

const stops: [number, number][] = [[0, 162], [19, 162], [30, 134], [38, 106], [47, 80], [53, 61], [62, 57]];

const shade = (t: number) => {
  const i = Math.max(1, stops.findIndex(([p]) => p >= t));
  const [p0, c0] = stops[i - 1];
  const [p1, c1] = stops[i];
  const c = Math.round(c0 + ((c1 - c0) * (t - p0)) / (p1 - p0));
  return `rgb(${c},${c},${c})`;
};

// curve running along the elbow, t px below its upper edge
const bend = (t: number) => {
  const x = 412 - (14 * t) / 62;
  const y = 21 + (59 * t) / 62;
  return `M242 ${t}H300Q${x - (y - t) * 4} ${t} ${x} ${y}`;
};

const Duct = () => (
  <svg className="absolute left-[155px] top-[177px] h-[84px] w-[416px]" viewBox="-0.500 -0.500 416 84" fill="none" stroke="#000">
    {Array.from({ length: 62 }, (_, t) => (
      <path key={t} d={bend(t + 0.5)} stroke={shade(t + 0.5)} strokeWidth="1.800" />
    ))}
    <path d="M0 0h242v62H0z" fill="url(#duct)" />
    <path d={bend(0)} />
    <path d={bend(62)} />
    <path d="M412 21l-14 59" />
    <path d="M299 31h9l14 2" />
    <path d="M324 33q26 4 80 17" strokeDasharray="3 2" />
  </svg>
);

const NavBar = () => (
  <div className="absolute right-px top-[28px] flex h-[118px] w-[36px] flex-col items-center rounded-md border-2 border-[#bdbfc0] bg-[#edf2f3]">
    <button aria-label="关闭导航栏" className="mr-[2px] mt-px self-end">
      <svg className="h-2 w-2" viewBox="0 0 8 8" fill="none" stroke="#a5a5a5">
        <circle cx="4" cy="4" r="3.500" />
        <path d="M2.500 2.500l3 3m0-3l-3 3" />
      </svg>
    </button>
    <button aria-label="二维控制盘" className="mt-[10px]">
      <svg className="h-[26px] w-[26px]" viewBox="0 0 26 26" fill="none" stroke="#9b9b9b">
        <path d="M10 1h9v9c0 6-4 9-9 9s-9-4-9-9 4-9 9-9z" fill="#f1f1f1" strokeWidth="1.500" />
        <circle cx="10" cy="10" r="4.500" />
        <path d="M7 14l-2 3m8-3l2 3" />
        <text x="12" y="23" fill="#6f9cc6" stroke="none" className="font-[Roboto] text-[10px] font-bold">2D</text>
      </svg>
    </button>
    <span className="mt-1 flex opacity-60"><Caret /></span>
    <div className="mt-1 h-px w-[26px] bg-[#c3b9ba]" />
    <button aria-label="缩放区域" className="mt-2">
      <Svg16>
        <path d="M10 15H1V1h7l3 3v3M8 1v3h3" stroke="#9b9b9b" />
        <circle cx="11" cy="10" r="3" stroke="#9b9b9b" />
        <path d="M13 12l3 3" stroke="#888" strokeWidth="1.600" />
      </Svg16>
    </button>
    <span className="mt-[10px] flex opacity-60"><Caret /></span>
    <button aria-label="导航栏选项" className="mb-px mr-[2px] mt-auto self-end">
      <svg className="h-2 w-2" viewBox="0 0 8 8" fill="none" stroke="#a5a5a5">
        <circle cx="4" cy="4" r="3.500" />
        <path d="M2 4h4" />
      </svg>
    </button>
  </div>
);

const Canvas = () => (
  <div className="relative min-w-0 flex-1 overflow-hidden bg-[#fdfdfd]">
    <Duct />
    <svg className="absolute left-[856px] top-[53px] h-5 w-3" viewBox="0 0 12 20" fill="#fff" stroke="#222" strokeWidth="1.100">
      <path d="M1 1v15l3.500-3 2.500 5.500 2.500-1L7 12h4.500z" />
    </svg>
    <div className="absolute right-1 top-2 flex items-center gap-[6px]">
      <button aria-label="最小化视图" className="mt-[3px] h-1 w-3 border border-[#555]" />
      <button aria-label="还原视图">
        <svg className="h-3 w-3" viewBox="0 0 12 12" fill="#fff" stroke="#444" strokeWidth="1.200">
          <path d="M3.500 3V.500h8v8H9M.500 3.500h8v8h-8zM3.500 6h2v3h-2z" />
        </svg>
      </button>
      <button aria-label="关闭视图">
        <svg className="h-3 w-3" viewBox="0 0 12 12" fill="#fff" stroke="#444" strokeWidth="1.200">
          <path d="M1 1h3l2 2 2-2h3v2L9 6l2 3v2H8L6 9l-2 2H1V9l2-3-2-3z" />
        </svg>
      </button>
    </div>
    <NavBar />
  </div>
);

const ViewControls = () => (
  <div className="flex h-[19px] shrink-0 items-center bg-[#edf0f1]">
    <button className="ml-5 flex w-[58px] shrink-0 gap-[6px] text-xs leading-4 text-black">
      <span>1</span>
      <span>:</span>
      <span>100</span>
    </button>
    <div className="flex shrink-0 items-center gap-[5px]">
      <button aria-label="详细程度图案">
        <Svg16>
          <path d="M.500 2.500h15v11H.500z" fill="#fff" />
          <path d="M1 4h14M1 8h14M1 12h14" stroke="#8b929b" strokeWidth="2" strokeDasharray="2 2" />
          <path d="M3 6h12M3 10h12" stroke="#8b929b" strokeWidth="2" strokeDasharray="2 2" />
        </Svg16>
      </button>
      <button aria-label="视觉样式">
        <Svg16>
          <path d="M1 6l4-4h10v7l-4 5H1z" fill="#a8d3f5" stroke={BLUE} />
          <path d="M1 6h10v8M11 6l4-4" stroke={BLUE} />
        </Svg16>
      </button>
      <button aria-label="日光路径开关">
        <Svg16>
          <circle cx="6" cy="7" r="3.500" fill="#ffd23c" stroke="#d18a13" />
          <path d="M6 1v1M1 7H0M2 3l1 1m7-1L9 4M2 11l1-1M6 12v2" stroke="#d18a13" strokeWidth="1.500" />
          <RedX />
        </Svg16>
      </button>
      <button aria-label="阴影开关" className="ml-px">
        <Svg16>
          <circle cx="7" cy="6" r="4.500" fill="#d6eafa" stroke={BLUE} />
          <path d="M2 13h6" strokeWidth="1.800" />
          <RedX />
        </Svg16>
      </button>
      <button aria-label="裁剪开关">
        <Svg16>
          <path d="M0 12h2M4 13V5h10M3 8h7V3M7 13V8" stroke={BLUE} strokeWidth="1.500" />
          <RedX />
        </Svg16>
      </button>
      <button aria-label="显示裁剪区域">
        <Svg16>
          <path d="M0 12h2M4 13V4h8M3 8h6M7 13V8" stroke={BLUE} strokeWidth="1.500" />
          <circle cx="12.500" cy="7" r="2.500" fill="#fff" stroke={BLUE} />
          <path d="M12.500 10v4" stroke={BLUE} />
        </Svg16>
      </button>
      <button aria-label="临时隐藏">
        <Svg16>
          <path d="M0 3c2-1 3 2 3 4m11-5c-2 0-1 3 1 5" />
          <ellipse cx="5.500" cy="9.500" rx="3" ry="2.500" fill="#fff" />
          <ellipse cx="12" cy="8" rx="3" ry="2.500" fill="#fff" />
        </Svg16>
      </button>
      <button aria-label="显示隐藏图元">
        <Svg16>
          <circle cx="8" cy="6" r="3" fill="#e3f2fd" stroke={BLUE} />
          <path d="M7 9h2v4H7z" fill="#fff" stroke={BLUE} />
        </Svg16>
      </button>
      <button aria-label="临时视图属性">
        <Svg16>
          <path d="M1.500 4.500h12v9h-12zM3 2v3m3-3v3m3-3v3" strokeWidth="1.400" strokeDasharray="3 1" />
          <path d="M9 9h6v6H9zM11 11l2 2" fill="#fff" />
        </Svg16>
      </button>
      <button aria-label="显示约束">
        <Svg16>
          <path d="M1 1v5m14-5v5M2 3h12M4 1L2 3l2 2m8-4l2 2-2 2" />
          <path d="M1 8v7h7" strokeDasharray="2 1.500" />
          <path d="M10 10h5v4h-5zM11 10V8h3v2" fill="#999" />
        </Svg16>
      </button>
    </div>
    <button aria-label="向左滚动" className="ml-[6px] shrink-0"><Chevron d={LEFT} /></button>
    <div className="flex h-full flex-1 justify-center">
      <div className="mt-[2px] h-[15px] w-[17px] bg-[#cbcbcd]" />
    </div>
    <button aria-label="向右滚动" className="mr-[7px] shrink-0"><Chevron d={RIGHT} /></button>
    <svg className="mr-px h-3 w-3 shrink-0" viewBox="0 0 12 12" fill="#b9bcbe">
      <path d="M9 1h2v2H9zM5 5h2v2H5zM9 5h2v2H9zM1 9h2v2H1zM5 9h2v2H5zM9 9h2v2H9z" />
    </svg>
  </div>
);

/* ---------- status bar ---------- */

const CursorMark = () => <path d="M8 7v8l2-2 1.500 3 1-.5L11 13h3z" fill="#fff" stroke="#444" />;

const StatusBar = () => (
  <footer className="h-[18px] shrink-0 overflow-hidden border-t-2 border-[#858585] bg-linear-to-b from-[#e2e2e2] to-[#cecece] text-xs">
    <div className="flex h-6 items-center">
      <div className="w-[368px] shrink-0 overflow-hidden leading-5 whitespace-nowrap text-black">
        单击可进行选择; 按 Tab 键并单击可选择其他项目; 按 Ctrl 键并单击可将
      </div>
      <button aria-label="工作集" className="ml-[2px] flex h-6 w-6 shrink-0 items-center justify-center bg-[#d4d4d4]">
        <Svg16>
          <path d="M5 3l3-1 4 1v4l-3 2-4-2z" fill="#a8dba8" stroke="#2d7a34" />
          <path d="M1 10l3-1 4 1v4l-4 1-3-1z" fill="#b9def7" stroke={BLUE} />
          <path d="M10 8c0 4 4 4 4 0M12 11v4" />
        </Svg16>
      </button>
      <div className="ml-1 flex h-6 w-[206px] shrink-0 items-center bg-white pr-1">
        <select aria-label="活动工作集" className="flex-1 appearance-none bg-transparent outline-none" />
        <Chevron d={DOWN} color="#a5a5a5" />
      </div>
      <button className="ml-[2px] flex h-6 w-[52px] shrink-0 items-center gap-1 bg-[#d4d4d4] pl-[6px] text-black">
        <svg className="h-4 w-4" viewBox="0 0 16 16" fill="#f4f4f4" stroke="#999">
          <path d="M3 2h10v4H9L2 14l3-8H3z" />
        </svg>
        :0
      </button>
      <button aria-label="设计选项" className="ml-[2px] flex h-6 w-6 shrink-0 items-center justify-center">
        <Svg16>
          <path d="M1 1h14v14H1z" fill="#f4f4f4" />
          <path d="M1 2.500h14" strokeWidth="2" />
          <path d="M3 6h3v3H3zM8 7h5M5 12h2m2 0h4" />
        </Svg16>
      </button>
      <button aria-label="添加到集" className="ml-[2px] flex h-6 w-6 shrink-0 items-center justify-center">
        <svg className="h-4 w-4" viewBox="0 0 16 16">
          <path d="M1 1h14v14H1z" fill="#9a9a9a" />
          <path d="M3 6l5 4h4" fill="none" stroke="#ddd" strokeWidth="1.500" />
        </svg>
      </button>
      <div className="ml-1 flex h-[22px] w-[156px] shrink-0 items-center border-2 border-[#eee] bg-white pr-px">
        <select aria-label="活动选项" className="flex-1 appearance-none bg-transparent text-[#777] outline-none">
          <option>主模型</option>
        </select>
        <Chevron d={DOWN} color="#a5a5a5" />
      </div>
      <div className="ml-auto mr-[83px] flex shrink-0 items-center gap-[10px]">
        <button aria-label="选择链接">
          <Svg16>
            <ellipse cx="4" cy="6" rx="3" ry="2.500" stroke="#d99a17" strokeWidth="2" />
            <path d="M7 6h3" stroke="#d99a17" strokeWidth="2" />
            <CursorMark />
            <RedX x={9} y={1} />
          </Svg16>
        </button>
        <button aria-label="选择基线图元">
          <Svg16>
            <path d="M1 12h8M1 9l7-7v7z" fill="#fff" stroke={BLUE} strokeWidth="1.400" />
            <CursorMark />
            <RedX x={9} y={1} />
          </Svg16>
        </button>
        <button aria-label="选择锁定图元">
          <Svg16>
            <path d="M2 1h8v3l-1 3 2 3H1l2-3-1-3zM6 10v5" fill="#f5a65a" stroke="#a9480f" />
            <CursorMark />
            <RedX x={9} y={1} />
          </Svg16>
        </button>
        <button aria-label="按面选择图元">
          <Svg16>
            <path d="M2 4l5-3v11l-5 3zM7 1h3" fill="#a8d3f5" stroke={BLUE} />
            <CursorMark />
            <RedX x={9} y={1} />
          </Svg16>
        </button>
        <button aria-label="选择时拖曳图元">
          <Svg16>
            <path d="M5 1v10M0 6h10M3.500 2.500L5 1l1.500 1.500M1.500 4.500L0 6l1.500 1.500M3.500 9.500L5 11l1.500-1.500" stroke="#111" strokeWidth="1.300" />
            <CursorMark />
            <RedX x={9} y={1} />
          </Svg16>
        </button>
        <button className="-ml-1 flex items-center text-black">
          <Svg16>
            <path d="M0 2h16l-6 7v6H6V9z" fill="url(#metalH)" strokeWidth="1.300" />
          </Svg16>
          :0
        </button>
      </div>
    </div>
  </footer>
);

/* ---------- page ---------- */

export default function App() {
  return (
    <div className="flex h-screen flex-col overflow-hidden bg-[#e5e5e5] font-['Open_Sans','Noto_Sans_CJK_SC',sans-serif] select-none">
      <Defs />
      <header className="flex shrink-0 bg-[#9f9f9e]">
        <button aria-label="应用程序菜单" className="flex h-9 w-[37px] shrink-0 items-center gap-[3px] border-r border-b border-[#333] bg-linear-to-b from-[#dcdcdc] to-[#a5a5a5]">
          <svg className="h-9 w-6 shrink-0" viewBox="0 0 24 36">
            <path d="M5 0h11c4 4 3 9 0 12l7 10-6 2-6-9-2 0-3 8-4 2 2-12z" fill="#1f479c" />
            <path d="M5 0h3L7 13l-1 10-4 2 2-12z" fill="#14316f" />
            <path d="M14 0c4 4 3 8 0 11l-4 1c3-4 4-8 4-12z" fill="#3b68c4" />
          </svg>
          <svg className="h-1 w-[7px]" viewBox="0 0 8 4"><path d="M0 0h8L4 4z" fill="#222" /></svg>
        </button>
        <div className="min-w-0 flex-1">
          <QuickAccess />
          <Tabs />
        </div>
      </header>
      <Ribbon />
      <div className="h-[26px] shrink-0" />
      <main className="flex min-h-0 flex-1">
        <Properties />
        <div className="flex min-w-0 flex-1 flex-col border-t-2 border-l-2 border-[#6e7073]">
          <div className="flex min-h-0 flex-1">
            <Canvas />
            <div className="flex w-[15px] flex-col items-center bg-[#edf0f1]">
              <button aria-label="画布向上滚动" className="flex h-4 items-center"><Chevron d={UP} /></button>
              <div className="flex w-full flex-1 items-center">
                <div className="h-[17px] w-full bg-[#cbcbcd]" />
              </div>
              <button aria-label="画布向下滚动" className="flex h-4 items-center"><Chevron d={DOWN} /></button>
            </div>
          </div>
          <ViewControls />
        </div>
      </main>
      <StatusBar />
    </div>
  );
}
